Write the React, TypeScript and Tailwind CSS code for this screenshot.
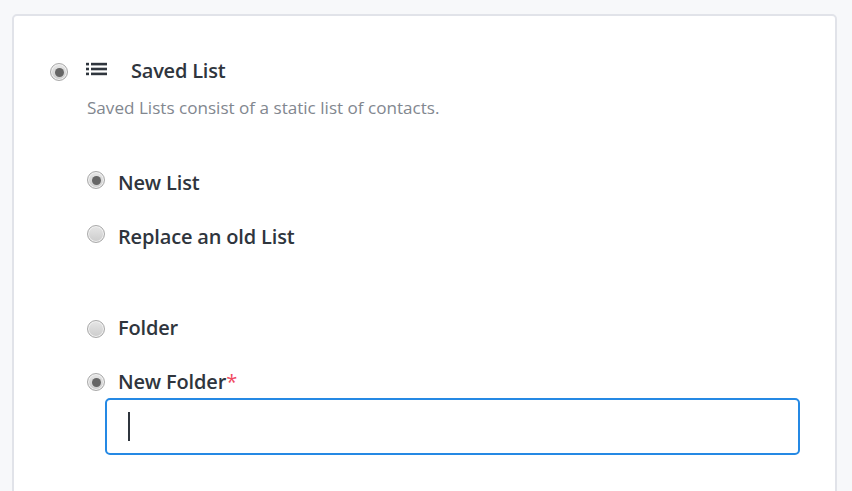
function Radio({ checked = false }: { checked?: boolean }) {
  return (
    <span className="flex h-[18px] w-[18px] shrink-0 items-center justify-center rounded-full border border-[#aaaaaa] bg-gradient-to-b from-[#e6e6e6] to-[#cccccc] shadow-[inset_0_0_0_1px_#f2f2f2]">
      {checked && <span className="h-[9px] w-[9px] rounded-full bg-[#666666]" />}
    </span>
  );
}

function Option({ label, checked, required, className, radioClass }: { label: string; checked?: boolean; required?: boolean; className: string; radioClass: string }) {
  return (
    <div className={`flex items-center ${className}`}>
      <div className={radioClass}>
        <Radio checked={checked} />
      </div>
      <span className="ml-[13px] text-[20px] leading-[28px] font-semibold tracking-[-0.16px] text-[#2f353d]">
        {label}
        {required && <span className="font-normal text-[#f0495f]">*</span>}
      </span>
    </div>
  );
}

export default function App() {
  return (
    <div className="h-[491px] overflow-hidden bg-[#f7f8fa] pt-[14px] pr-[15px] pl-[12px] font-['Open_Sans','Noto_Sans',sans-serif]">
      <div className="h-[520px] rounded-[5px] border-2 border-[#e1e3e9] bg-white pt-[41px] pl-[36px]">
        <div className="flex items-center">
          <div className="mt-[2px]">
            <Radio checked />
          </div>
          <svg className="mt-[-5px] ml-[18px]" width="21" height="14" viewBox="0 0 21 14" fill="#2f353d">
            <rect x="0" y="0.8" width="3" height="2.6" />
            <rect x="0" y="5.7" width="3" height="2.6" />
            <rect x="0" y="10.6" width="3" height="2.6" />
            <rect x="5" y="0.8" width="16" height="2.6" />
            <rect x="5" y="5.7" width="16" height="2.6" />
            <rect x="5" y="10.6" width="16" height="2.6" />
          </svg>
          <span className="ml-[24px] text-[20px] leading-[28px] font-semibold tracking-[-0.22px] text-[#2f353d]">Saved List</span>
        </div>
        <p className="mt-[11px] ml-[37px] text-[17.1px] leading-[24px] text-[#82878f]">Saved Lists consist of a static list of contacts.</p>
        <div className="ml-[37px]">
          <Option className="mt-[49px]" radioClass="-mt-[6px]" label="New List" checked />
          <Option className="mt-[26px]" radioClass="-mt-[6px]" label="Replace an old List" />
          <Option className="mt-[63px]" radioClass="mt-[2px]" label="Folder" />
          <Option className="mt-[26px]" radioClass="mt-0" label="New Folder" checked required />
          <div className="mt-[2px] ml-[18px] flex h-[57px] w-[695px] items-center rounded-[5px] border-2 border-[#2589e4] bg-white pl-[21px]">
            <span className="h-[29px] w-[2px] bg-[#2f353d]" />
          </div>
        </div>
      </div>
    </div>
  );
}
